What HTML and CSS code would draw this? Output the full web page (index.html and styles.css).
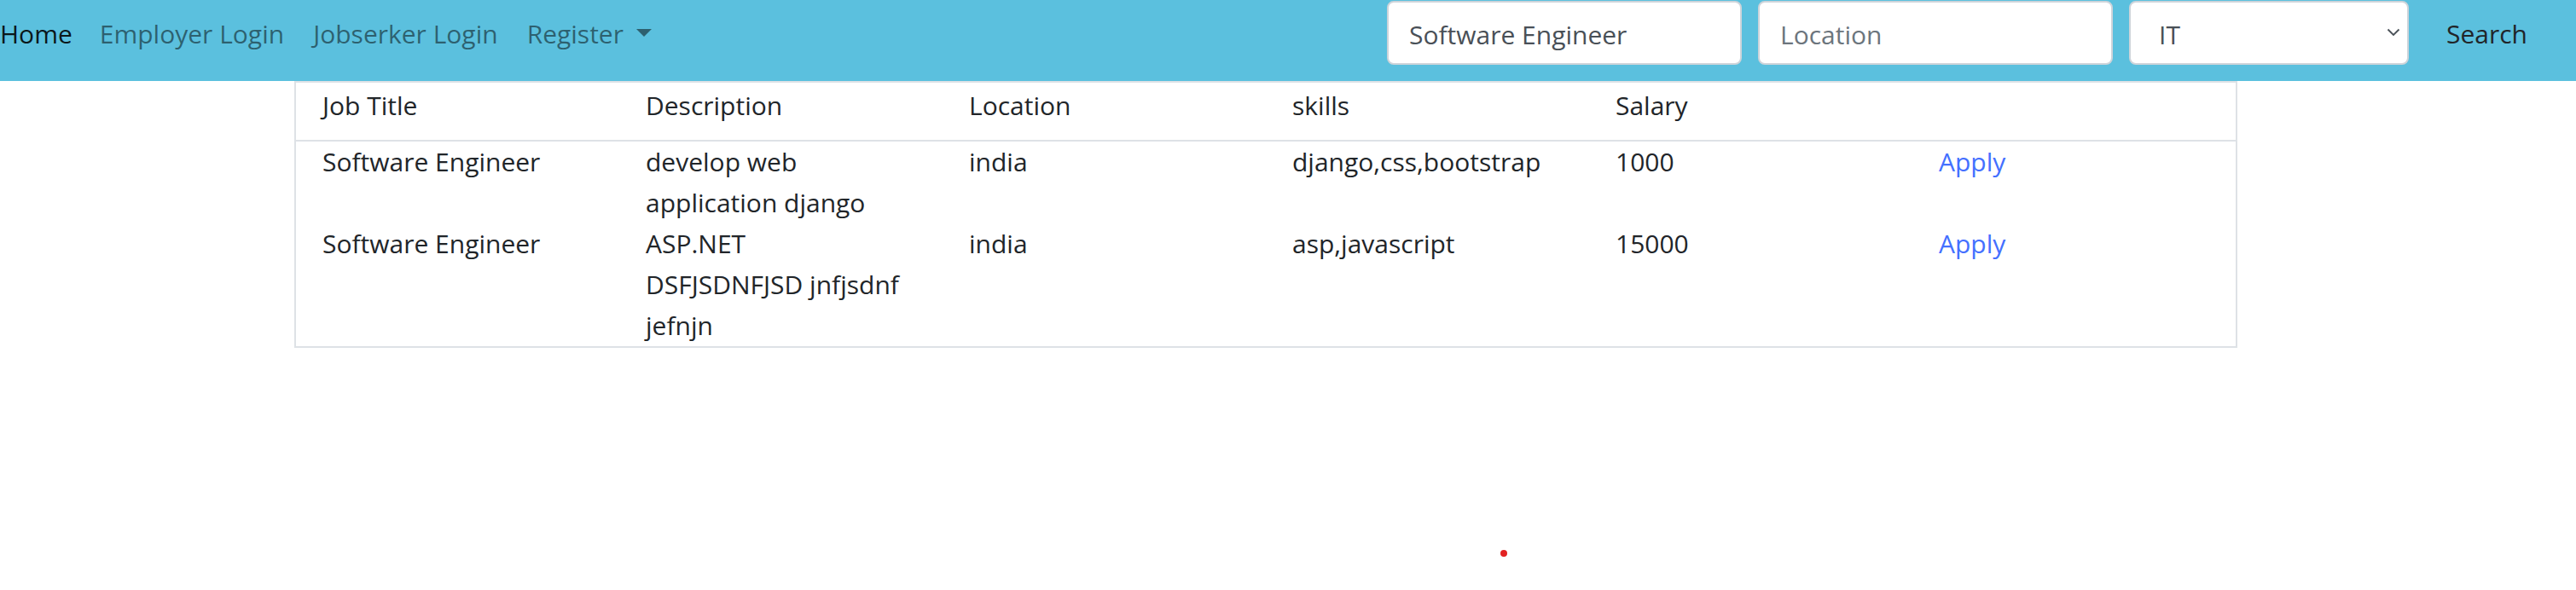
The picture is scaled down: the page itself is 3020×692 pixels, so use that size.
FILE: index.html
```html
<!DOCTYPE html>
<html lang="en">
<head>
<meta charset="utf-8">
<title>Jobs</title>
<link rel="stylesheet" href="styles.css">
</head>
<body>
<nav class="navbar">
  <ul class="nav">
    <li><a class="nav-link active first" href="#">Home</a></li>
    <li><a class="nav-link" href="#">Employer Login</a></li>
    <li><a class="nav-link" href="#">Jobserker Login</a></li>
    <li><a class="nav-link dropdown-toggle" href="#">Register</a></li>
  </ul>
  <form class="search">
    <input class="field" type="text" value="Software Engineer">
    <input class="field" type="text" placeholder="Location">
    <div class="select-wrap">
      <select class="select">
        <option>IT</option>
      </select>
      <svg class="chevron" width="16" height="10" viewBox="0 0 16 10"><polyline points="1.5,1.5 8,8 14.5,1.5" fill="none" stroke="#495057" stroke-width="1.8"/></svg>
    </div>
    <button class="btn" type="button">Search</button>
  </form>
</nav>

<table class="jobs">
  <thead>
    <tr>
      <th>Job Title</th>
      <th>Description</th>
      <th>Location</th>
      <th>skills</th>
      <th>Salary</th>
      <th></th>
    </tr>
  </thead>
  <tbody>
    <tr>
      <td>Software Engineer</td>
      <td>develop web application django</td>
      <td>india</td>
      <td>django,css,bootstrap</td>
      <td>1000</td>
      <td><a class="apply" href="#">Apply</a></td>
    </tr>
    <tr>
      <td>Software Engineer</td>
      <td>ASP.NET DSFJSDNFJSD jnfjsdnf jefnjn</td>
      <td>india</td>
      <td>asp,javascript</td>
      <td>15000</td>
      <td><a class="apply" href="#">Apply</a></td>
    </tr>
  </tbody>
</table>

<span class="dot"></span>
</body>
</html>
```

FILE: styles.css
```css
html, body {
  margin: 0;
  padding: 0;
  background: #fff;
}

body {
  font-family: "Open Sans", "Noto Sans", sans-serif;
  font-size: 30px;
  line-height: 48px;
  color: #212529;
  position: relative;
  min-height: 692px;
}

/* ---------- navbar ---------- */
.navbar {
  display: flex;
  align-items: flex-start;
  height: 95px;
  box-sizing: border-box;
  padding: 0 33px 0 0;
  background: #5bc0de;
}

.nav {
  display: flex;
  list-style: none;
  margin: 0;
  padding: 0;
}

.nav-link {
  display: block;
  padding: 16px 17px;
  font-size: 30px;
  line-height: 48px;
  color: rgba(0, 0, 0, 0.5);
  text-decoration: none;
}

.nav-link.first {
  padding-left: 0;
  padding-right: 15px;
}

.nav-link.active {
  color: rgba(0, 0, 0, 0.9);
}

.dropdown-toggle::after {
  content: "";
  display: inline-block;
  margin-left: 0.5em;
  vertical-align: 0.255em;
  border-top: 0.3em solid;
  border-right: 0.3em solid transparent;
  border-left: 0.3em solid transparent;
  border-bottom: 0;
}

/* ---------- search form ---------- */
.search {
  margin-left: auto;
  display: flex;
  align-items: flex-start;
  gap: 19px;
  padding-top: 1px;
}

.field {
  width: 416px;
  height: 75px;
  box-sizing: border-box;
  margin: 0;
  padding: 4px 24px 0;
  border: 2px solid #ced4da;
  border-radius: 8px;
  background: #fff;
  font-family: "Open Sans", "Noto Sans", sans-serif;
  font-size: 30px;
  color: #495057;
  outline: none;
}

.field::placeholder {
  color: #6c757d;
  opacity: 1;
}

.select-wrap {
  position: relative;
  width: 328px;
  height: 75px;
}

.select {
  -webkit-appearance: none;
  appearance: none;
  width: 100%;
  height: 100%;
  box-sizing: border-box;
  margin: 0;
  padding: 4px 40px 0 33px;
  border: 2px solid #ced4da;
  border-radius: 8px;
  background: #fff;
  font-family: "Open Sans", "Noto Sans", sans-serif;
  font-size: 30px;
  color: #495057;
  outline: none;
}

.chevron {
  position: absolute;
  right: 10px;
  top: 32px;
  pointer-events: none;
}

.btn {
  margin: 0 0 0 1px;
  padding: 15px 24px;
  border: 0;
  background: transparent;
  font-family: "Open Sans", "Noto Sans", sans-serif;
  font-size: 30px;
  line-height: 48px;
  color: #212529;
  cursor: pointer;
}

/* ---------- table ---------- */
.jobs {
  margin-left: 345px;
  width: 2278px;
  table-layout: fixed;
  border-collapse: separate;
  border-spacing: 0;
  border: 2px solid #dee2e6;
  font-size: 30px;
  line-height: 48px;
  color: #212529;
}

.jobs th {
  font-weight: 400;
  text-align: left;
  padding: 3px 40px 16px 31px;
  border-bottom: 2px solid #dee2e6;
}

.jobs td {
  padding: 0 40px 0 31px;
  vertical-align: top;
}

.apply {
  color: #4470ff;
  text-decoration: none;
}

/* ---------- stray marker ---------- */
.dot {
  position: absolute;
  left: 1759px;
  top: 645px;
  width: 8px;
  height: 8px;
  border-radius: 50%;
  background: #e22222;
}
```
